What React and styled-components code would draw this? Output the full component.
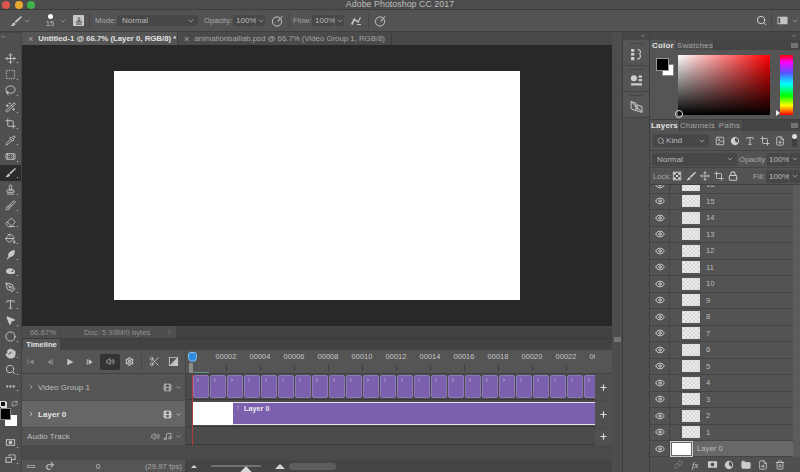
import React from "react";
import styled, { createGlobalStyle } from "styled-components";
import { Move, SquareDashed, Lasso, WandSparkles, Crop, Pipette, Bandage, Stamp, Brush, Eraser, PaintBucket, PenTool, Type, MousePointer2, Circle, Hand, Search, Ellipsis, Scissors, Volume2, Settings, Music, Film, ChevronDown, ChevronRight, Plus, Eye, Link, Folder, Trash2, Lock, Image, FilePlus, Redo2, Repeat } from "lucide-react";

const Global = createGlobalStyle`
  html, body { margin: 0; padding: 0; background: #4a4a4a; }
  * { box-sizing: border-box; }
  #root { width: 800px; height: 472px; overflow: hidden; }
`;

const Page = styled.div`
  width: 800px; height: 472px; display: flex; flex-direction: column; overflow: hidden;
  background: #505050; color: #c4c4c4;
  font-family: "Liberation Sans", sans-serif; font-size: 8px; letter-spacing: .05px;
`;
const TitleBar = styled.div`
  height: 10px; flex: none; background: #4c4c4c; position: relative; display: flex; justify-content: center;
  border-bottom: 1px solid #3c3c3c;
`;
const Title = styled.div`
  font: 8.8px/8px "Liberation Sans", sans-serif; color: #bdbdbd; letter-spacing: .05px;
`;
const Lights = styled.div`
  position: absolute; left: 2px; top: 1px; display: flex; gap: 4.5px;
`;
const Light = styled.i`
  width: 8px; height: 8px; border-radius: 50%; background: ${p => p.$c}; display: block;
`;
const Options = styled.div`
  height: 22px; flex: none; background: #535353; display: flex; align-items: center;
  border-bottom: 1px solid #3f3f3f;
`;
const Slot = styled.div`
  width: ${p => p.$w}px; padding-left: ${p => p.$pl || 0}px; flex: none; display: flex; align-items: center; justify-content: center; height: 100%;
`;
const OptSep = styled.div`
  width: 1px; height: 16px; background: #464646; flex: none; margin: 0 ${p => p.$m || 0}px;
`;
const Field = styled.div`
  width: ${p => p.$w}px; height: ${p => p.$h || 11}px; flex: none; background: #474747; border-radius: 2px; padding: 0 3px 0 ${p => p.$pl || 3}px;
  display: flex; align-items: center; justify-content: space-between; color: #bcbcbc; white-space: nowrap; gap: 2px;
`;
const KindLabel = styled.span`
  flex: 1; display: flex; align-items: center; gap: 1px;
`;
const ChevBox = styled.div`
  width: ${p => p.$w || 9}px; height: ${p => p.$h || 11}px; margin-left: 1px; flex: none; background: #474747; border-radius: 2px; display: flex; align-items: center; justify-content: center; color: #b0b0b0;
`;
const Lbl = styled.span`
  flex: none; width: ${p => p.$w}px; margin-left: ${p => p.$ml || 0}px; color: #a8a8a8; white-space: nowrap; font-size: 7.6px;
`;
const Spacer = styled.div` flex: 1; `;
const BrushDot = styled.div`
  width: ${p => p.$w}px; display: flex; flex-direction: column; align-items: center; flex: none; font-size: 7.5px; line-height: 8px; color: #bbb;
  &::before { content: ""; width: 5px; height: 5px; background: #fff; border-radius: 50%; margin-bottom: 1px; }
`;
const PresetBox = styled.div`
  width: 11px; height: 11px; background: #c9c9c9; flex: none; display: flex; align-items: center; justify-content: center; color: #333; border-radius: 1px;
`;
const Main = styled.div`
  flex: 1; display: flex; min-height: 0;
`;
const Tools = styled.div`
  width: 22px; flex: none; background: #505050; display: flex; flex-direction: column; align-items: center; border-right: 1px solid #444;
`;
const Grip = styled.div`
  height: 18px; width: 100%; flex: none; font-size: 6px; line-height: 7px; color: #999; padding-left: 1px; border-top: 1px solid #454545;
`;
const Tool = styled.div`
  width: 21px; height: 16.4px; flex: none; display: flex; align-items: center; justify-content: center; position: relative; color: #c8c8c8;
  background: ${p => p.$on ? "#2b2b2b" : "transparent"};
  &::after { content: ""; position: absolute; right: 3px; bottom: 3px; width: 1px; height: 1px; background: #ccc; }
`;
const SwapRow = styled.div`
  width: 21px; height: 14px; flex: none; display: flex; align-items: flex-end; justify-content: space-between; padding: 0 3px 1px 0; color: #ccc;
`;
const MiniChips = styled.span`
  width: 6px; height: 6px; background: #111; border: 1px solid #ddd; box-shadow: 1px 1px 0 #ddd; flex: none;
`;
const Swatches = styled.div`
  width: 21px; height: 24px; flex: none; position: relative; margin-bottom: 2px;
`;
const FgSwatch = styled.div`
  position: absolute; left: 0; top: 0; width: 11px; height: 12px; background: #000; border: 1px solid #888; z-index: 1;
`;
const BgSwatch = styled.div`
  position: absolute; left: 5px; top: 7px; width: 12px; height: 11px; background: #fff;
`;
const Center = styled.div`
  width: 590px; flex: none; display: flex; flex-direction: column;
`;
const Tabs = styled.div`
  height: 13px; flex: none; display: flex; background: #484848; align-items: stretch; overflow: hidden;
`;
const Tab = styled.div`
  width: ${p => p.$w}px; flex: none; background: ${p => p.$on ? "#565656" : "#4a4a4a"}; color: ${p => p.$on ? "#e2e2e2" : "#a6a6a6"};
  font-weight: ${p => p.$on ? 700 : 400}; display: flex; align-items: center; gap: 5px; padding-left: 6px; white-space: nowrap;
  font-size: 7.8px; letter-spacing: 0;
  border-right: 1px solid #3c3c3c;
`;
const TabX = styled.span` color: #a4a4a4; font-weight: 400; font-size: 9px; `;
const Canvas = styled.div`
  height: 281px; flex: none; background: #282828; display: flex; align-items: center; justify-content: center;
`;
const Sheet = styled.div`
  width: 406px; height: 229px; background: #fff;
`;
const Status = styled.div`
  height: 12px; flex: none; background: #424242; display: flex; align-items: stretch; font-size: 7.6px; color: #929292;
`;
const Zoomed = styled.div`
  width: 38px; flex: none; background: #4e4e4e; padding-left: 8px; display: flex; align-items: center; border-right: 1px solid #484848;
`;
const DocInfo = styled.div`
  width: 116px; flex: none; background: #4e4e4e; display: flex; align-items: center; justify-content: space-between; padding: 0 3px 0 24px;
`;
const Timeline = styled.div`
  flex: 1; display: flex; flex-direction: column; background: #4a4a4a; position: relative; overflow: hidden; border-top: 1px solid #3a3a3a;
`;
const TimelineHead = styled.div`
  height: 11px; flex: none; background: #424242; display: flex;
`;
const TimelineTab = styled.div`
  width: 37px; margin-left: 1px; background: #555; color: #e2e2e2; font-weight: 700; font-size: 7.6px; letter-spacing: 0; display: flex; align-items: center; justify-content: center;
`;
const TimelineControls = styled.div`
  height: 24px; flex: none; display: flex; background: #555; border-bottom: 1px solid #434343;
`;
const Transport = styled.div`
  width: 164px; flex: none; display: flex; align-items: center; border-right: 1px solid #434343; color: #c4c4c4;
`;
const Btn = styled.div`
  width: ${p => p.$w || 20}px; height: 16px; flex: none; display: flex; align-items: center; justify-content: center;
  color: ${p => p.$dim ? "#8a8a8a" : "inherit"}; background: ${p => p.$on ? "#333" : "transparent"}; border-radius: 2px;
`;
const Ruler = styled.div`
  width: 409px; flex: none; display: flex; padding-left: 23px; overflow: hidden;
`;
const RulerMark = styled.div`
  width: 34px; flex: none; display: flex; flex-direction: column; align-items: center; font-size: 7.4px; color: #c6c6c6; padding-top: 3px; line-height: 8px; letter-spacing: .1px;
  &::after { content: ""; width: 1px; height: 6px; background: #3e3e3e; margin-top: 4px; }
`;
const RulerEnd = styled.div` width: 17px; flex: none; `;
const Track = styled.div`
  display: flex; height: ${p => p.$h}px; flex: none; margin-bottom: 1px; background: ${p => p.$on ? "#666" : "#555"};
`;
const TrackLabel = styled.div`
  width: 164px; flex: none; display: flex; align-items: center; padding: 0 3px 0 5px; color: ${p => p.$on ? "#e4e4e4" : "#bebebe"}; font-weight: ${p => p.$on ? 700 : 400}; gap: 3px; border-right: 1px solid #434343;
`;
const TrackName = styled.span` flex: 1; white-space: nowrap; `;
const TrackBody = styled.div`
  width: 409px; flex: none; background: #4b4b4b; display: flex; padding: 1px 0 1px 7px; overflow: hidden; align-items: stretch; border-bottom: 1px solid #3a3a3a;
`;
const Clip = styled.div`
  width: 16px; margin-right: 1px; flex: none; background: #7b60ae; border: 1px solid #8d78b8; border-radius: 2px; color: #ddd; padding: 1px 0 0 1px;
  display: flex; align-items: flex-start;
`;
const Blank = styled.div`
  width: 40px; flex: none; background: #fff;
`;
const Bar = styled.div`
  flex: 1; background: #7b60ae; border-top: 1px solid #e8e4f0; border-bottom: 1px solid #e8e4f0; color: #eee; font-weight: 700; font-size: 7.2px; display: flex; align-items: flex-start; gap: 3px; padding: 1px 0 0 2px;
`;
const PlusCell = styled.div`
  width: 17px; flex: none; display: flex; align-items: center; justify-content: center; color: #ddd; background: #505050;
`;
const BottomBar = styled.div`
  height: 12px; flex: none; margin-top: auto; display: flex; background: #454545; align-items: center;
`;
const BottomLeft = styled.div`
  width: 164px; height: 100%; flex: none; background: #555; display: flex; align-items: center; color: #c4c4c4; padding-left: 5px; border-right: 1px solid #3f3f3f;
`;
const Frames = styled.span`
  width: 8px; height: 3px; border: 1px solid #999; flex: none;
`;
const ZoomBits = styled.div`
  display: flex; align-items: center; margin-left: 5px; flex: none; width: 94px; justify-content: space-between;
`;
const Mount = styled.div`
  width: 0; height: 0; border-left: ${p => p.$s}px solid transparent; border-right: ${p => p.$s}px solid transparent; border-bottom: ${p => p.$s}px solid #d6d6d6; flex: none;
`;
const ZoomTrack = styled.div`
  width: 50px; height: 2px; background: #707070; position: relative; flex: none;
  &::after { content: ""; position: absolute; left: 31px; top: 3px; width: 8px; height: 8px; background: #d8d8d8; transform: rotate(45deg); }
`;
const ScrollThumb = styled.div`
  width: 47px; height: 7px; margin-left: 4px; background: #5e5e5e; border-radius: 4px; flex: none;
`;
const Playhead = styled.div`
  position: absolute; left: 170px; top: 35px; bottom: 27px; width: 1px; background: #b33a3a;
`;
const PlayKnob = styled.div`
  position: absolute; left: 166px; top: 13px; width: 9px; height: 10px; background: #2f8be0; border-radius: 3px 3px 5px 5px; border: 1px solid #7fbcf0;
`;
const WorkMarker = styled.div`
  position: absolute; left: 167px; top: 24px; width: 4px; height: 10px; background: #8a8a8a; border-radius: 1px;
`;
const WorkLine = styled.div`
  position: absolute; left: 171px; top: 33px; width: 16px; height: 1px; background: #5f9a96;
`;
const Gutter = styled.div`
  width: 11px; flex: none; background: #4d4d4d; border-right: 1px solid #3e3e3e; display: flex; flex-direction: column; align-items: center; padding-top: 305px;
`;
const MiniMenu = styled.div`
  width: 7px; height: 5px; background: #747474; flex: none;
`;
const Dock = styled.div`
  width: 27px; flex: none; background: #4f4f4f; display: flex; flex-direction: column; border-right: 1px solid #3e3e3e;
`;
const DockTop = styled.div`
  height: 8px; flex: none; background: #474747; font-size: 6px; line-height: 7px; text-align: right; padding-right: 4px; color: #9a9a9a;
`;
const DockItem = styled.div`
  height: 26px; flex: none; background: #555; border-bottom: 1px solid #434343; display: flex; align-items: center; justify-content: center; color: #cfcfcf; padding-top: 3px; position: relative;
  &::before { content: ""; position: absolute; top: 3px; left: 7px; width: 13px; height: 1px; background: #444; }
`;
const Side = styled.div`
  flex: 1; display: flex; flex-direction: column; background: #535353; min-width: 0;
`;
const SideTop = styled(DockTop)``;
const PanelTabs = styled.div`
  height: ${p => p.$h || 10}px; flex: none; display: flex; background: #444; align-items: stretch; position: relative;
`;
const PanelTab = styled.div`
  width: ${p => p.$w}px; flex: none; display: flex; align-items: center; justify-content: center; letter-spacing: .2px;
  background: ${p => p.$on ? "#555" : "#4b4b4b"}; color: ${p => p.$on ? "#e2e2e2" : "#a4a4a4"}; font-weight: ${p => p.$on ? 700 : 400}; border-right: 1px solid #3f3f3f;
`;
const PanelMenu = styled(MiniMenu)`
  position: absolute; right: 2px; top: 3px;
`;
const ColorBody = styled.div`
  height: 70px; flex: none; background: #555; display: flex; padding: 5px 7px 0 6px; border-bottom: 1px solid #3f3f3f;
`;
const ColorChips = styled.div`
  width: 22px; flex: none; position: relative;
`;
const ChipFg = styled.div`
  position: absolute; left: 0; top: 3px; width: 13px; height: 13px; background: #000; border: 1px solid #999; z-index: 1;
`;
const ChipBg = styled.div`
  position: absolute; left: 6px; top: 9px; width: 12px; height: 12px; background: #fff; border: 1px solid #888;
`;
const ColorField = styled.div`
  width: 92px; height: 60px; flex: none; position: relative;
  background: linear-gradient(to top, #000 0%, rgba(0,0,0,0) 100%), linear-gradient(to right, #fff 0%, #f00 100%);
  &::after { content: ""; position: absolute; left: -3px; bottom: -3px; width: 6px; height: 6px; border-radius: 50%; border: 1px solid #ddd; }
`;
const Hue = styled.div`
  width: 13px; height: 60px; flex: none; margin-left: 10px; position: relative;
  background: linear-gradient(to bottom, #f00 0%, #f0f 12%, #55f 30%, #0ff 48%, #0f0 68%, #ff0 84%, #f00 100%);
  &::before { content: ""; position: absolute; left: -4px; bottom: -1px; border-left: 4px solid #eee; border-top: 3px solid transparent; border-bottom: 3px solid transparent; }
`;
const FilterRow = styled.div`
  height: 20px; flex: none; display: flex; align-items: center; padding-left: 3px; border-bottom: 1px solid #454545; color: #ccc;
`;
const Toggle = styled.div`
  width: 5px; height: 12px; border-radius: 3px; background: #3f3f3f; flex: none; position: relative; margin-left: 6px;
  &::before { content: ""; position: absolute; top: -1px; left: 0; width: 5px; height: 5px; border-radius: 50%; background: #ddd; }
`;
const BlendRow = styled.div`
  height: 17px; flex: none; display: flex; align-items: center; padding-left: 2px; border-bottom: 1px solid #454545;
`;
const LockRow = styled.div`
  height: 17px; flex: none; display: flex; align-items: center; padding-left: 3px; border-bottom: 1px solid #3f3f3f; color: #ccc;
`;
const Small = styled.span`
  width: 12px; height: 12px; flex: none; display: flex; align-items: center; justify-content: center; margin-left: ${p => p.$ml ?? 2}px; color: #ccc;
`;
const ListWrap = styled.div`
  flex: 1; min-height: 0; display: flex;
`;
const List = styled.div`
  width: 143px; flex: none; display: flex; flex-direction: column; justify-content: flex-end; overflow: hidden; background: #535353;
`;
const ScrollRail = styled.div` flex: 1; background: #5c5c5c; `;
const Row = styled.div`
  height: ${p => p.$active ? 16 : 16.5}px; flex: none; display: flex; align-items: center; border-bottom: 1px solid #444; color: #bdbdbd; font-size: 7.6px;
  background: ${p => p.$active ? "#686868" : "transparent"};
`;
const EyeCell = styled.div`
  width: 20px; flex: none; height: 100%; display: flex; align-items: center; justify-content: center; border-right: 1px solid #454545; color: #ddd; background: #535353;
`;
const Thumb = styled.div`
  width: 18px; height: 12px; flex: none; margin: 0 6px 0 12px; border: 1px solid #ddd;
  background: repeating-conic-gradient(#d6d6d6 0 25%, #ededed 0 50%) 0 0 / 4px 4px;
`;
const WhiteThumb = styled.div`
  width: 19px; height: 12px; flex: none; margin: 0 6px 0 2px; background: #fff; outline: 1px solid #ccc; outline-offset: 1px;
`;
const Footer = styled.div`
  height: 15px; flex: none; background: #505050; display: flex; align-items: center; padding-left: 22px; gap: 5px; color: #ccc;
`;
const Fx = styled.span`
  font: italic 9px "Liberation Serif", serif; color: #ccc; width: 12px; text-align: center; flex: none;
`;
const Glyph = styled.svg`
  flex: none; display: block; fill: currentColor; stroke: none;
`;

const Draw = ({ s = 11, children, vb = 12 }) => <Glyph width={s} height={s} viewBox={`0 0 ${vb} ${vb}`}>{children}</Glyph>;

const BrushGlyph = ({ s }) => <Draw s={s}><path d="M11 1 L12 2 L6 8 L4.6 6.6 Z M4 7.2 L5.6 8.8 C5 10.8 3 11.4 .6 11 C2 10 2.4 8 4 7.2 Z" /></Draw>;
const DodgeGlyph = () => <Draw><path d="M10.5 1 C11.5 5 9 9 5 9 L3 11.5 L2 10.8 L3.8 8.2 C2.2 5 6 1.4 10.5 1 Z" /></Draw>;
const SpongeGlyph = () => <Draw><path d="M3 3 C6 1.4 10 3 11 6 C11.5 8.6 8 9.2 6 8.6 C4 9 1 8 1 6 C1 5 2 3.6 3 3 Z" /><circle cx="8" cy="5.6" r="1" fill="#505050" /></Draw>;
const MaskGlyph = () => <Draw><path d="M1 2.5h10v7H1z M2 3.5v5h8v-5z" fillRule="evenodd" /><circle cx="6" cy="6" r="2" /></Draw>;
const ScreenGlyph = () => <Draw><path d="M4 1.5h7.5v6H8v-1h2.5v-4H5v1H4z M.5 4.5h7v6h-7z M1.5 5.5v4h5v-4z" fillRule="evenodd" /></Draw>;
const ToStart = () => <Draw s={8}><path d="M1 2h1.4v8H1z M10 2v8L4 6z" /></Draw>;
const StepBack = () => <Draw s={8}><path d="M8 2v8L2 6z M9.4 2h1.4v8H9.4z" /></Draw>;
const PlayGlyph = () => <Draw s={8}><path d="M2 1v10l9-5z" /></Draw>;
const StepNext = () => <Draw s={8}><path d="M1.2 2h1.4v8H1.2z M4 2v8l6-4z" /></Draw>;
const TransitionGlyph = () => <Draw><path d="M1 1h10v10H1z M2 2v8L10 2z" fillRule="evenodd" /></Draw>;
const DockOne = () => <Draw s={13}><path d="M1 1h3v2.4H1z M1 4.6h3V7H1z M1 8.2h3v3H1z" /><path d="M7 1.5c3 0 3.4 2.6 1.8 4 1.6 1.4 1 4.5-2 5" fill="none" stroke="currentColor" /></Draw>;
const DockTwo = () => <Draw s={13}><circle cx="3.6" cy="4" r="2.8" /><path d="M8 1.4h3v2H8z M8 4.6h3v2H8z M1 8.6h10v2H1z" /></Draw>;
const DockThree = () => <Draw s={13}><path d="M1 1.5 5.5 3v7L1 8z M6.5 4.5 11 6v5.5L6.5 10z M1 1.5 11 11" fill="none" stroke="currentColor" strokeWidth=".9" /></Draw>;
const LockChecker = () => <Draw s={10}><path d="M1 1h10v10H1z M2 2v8h8V2z" fillRule="evenodd" /><path d="M2 2h2.6v2.6H2z M7.4 2H10v2.6H7.4z M4.7 4.7h2.6v2.6H4.7z M2 7.4h2.6V10H2z M7.4 7.4H10V10H7.4z" /></Draw>;
const MaskBtn = () => <Draw s={11}><path d="M1 2.5h10v7H1z M6 4a2 2 0 1 0 .01 0z" fillRule="evenodd" /></Draw>;
const AdjBtn = () => <Draw s={10}><path d="M6 1a5 5 0 1 0 .01 0z M6 2.2V6l3 2.4A3.8 3.8 0 0 0 6 2.2z" fillRule="evenodd" /></Draw>;
const Aim = () => <Draw s={12}><circle cx="6" cy="6.5" r="4.6" fill="none" stroke="currentColor" /><path d="M6.5 6 11 1l.6.6L7 7z" /></Draw>;
const AimFlow = () => <Draw s={12}><path d="M1 9 4 3l4 3 2-4 1 .6L8.4 8 4.6 5.4 2.6 10z M7 9h4v1H7z" /></Draw>;
const WorkspaceIcon = () => <Draw s={11}><path d="M.5 2h11v8H.5z M1.5 3v6h2V3z" fillRule="evenodd" /></Draw>;

const tools = [
  <Move size={11} />, <SquareDashed size={11} />, <Lasso size={11} />, <WandSparkles size={11} />,
  <Crop size={11} />, <Pipette size={11} />, <Bandage size={11} />, <BrushGlyph s={11} />,
  <Stamp size={11} />, <Brush size={11} />, <Eraser size={11} />, <PaintBucket size={11} />,
  <DodgeGlyph />, <SpongeGlyph />, <PenTool size={11} />, <Type size={11} strokeWidth={2} />,
  <MousePointer2 size={11} fill="#c8c8c8" />, <Circle size={11} />, <Hand size={11} fill="#c8c8c8" />, <Search size={11} />,
  <Ellipsis size={11} strokeWidth={3} />
];
const layers = [16, 15, 14, 13, 12, 11, 10, 9, 8, 7, 6, 5, 4, 3, 2, 1];
const marks = ["00002", "00004", "00006", "00008", "00010", "00012", "00014", "00016", "00018", "00020", "00022", "00024"];

export default function App() {
  return (
    <Page>
      <Global />
      <TitleBar>
        <Lights><Light $c="#d9544d" /><Light $c="#e8a82e" /><Light $c="#3fb34a" /></Lights>
        <Title>Adobe Photoshop CC 2017</Title>
      </TitleBar>
      <Options>
        <Slot $w={22} $pl={10}><BrushGlyph s={12} /></Slot>
        <Slot $w={10}><ChevronDown size={8} color="#aaa" /></Slot>
        <Slot $w={10} />
        <BrushDot $w={16}>15</BrushDot>
        <Slot $w={10}><ChevronDown size={8} color="#aaa" /></Slot>
        <Slot $w={5} />
        <PresetBox><Stamp size={8} /></PresetBox>
        <OptSep $m={5} />
        <Lbl $w={22}>Mode:</Lbl>
        <Field $w={81} $pl={5}>Normal<ChevronDown size={8} /></Field>
        <Slot $w={6} />
        <Lbl $w={29}>Opacity:</Lbl>
        <Field $w={22}>100%</Field>
        <ChevBox><ChevronDown size={8} /></ChevBox>
        <Slot $w={24}><Aim /></Slot>
        <OptSep />
        <Slot $w={3} />
        <Lbl $w={19}>Flow:</Lbl>
        <Field $w={22}>100%</Field>
        <ChevBox><ChevronDown size={8} /></ChevBox>
        <Slot $w={24}><AimFlow /></Slot>
        <OptSep />
        <Slot $w={21}><Aim /></Slot>
        <Spacer />
        <Slot $w={14}><Search size={11} color="#ddd" strokeWidth={2} /></Slot>
        <OptSep $m={3} />
        <Slot $w={14}><WorkspaceIcon /></Slot>
        <Slot $w={11}><ChevronDown size={8} color="#aaa" /></Slot>
      </Options>
      <Main>
        <Tools>
          <Grip>››</Grip>
          {tools.map((icon, i) => (
            <Tool key={i} $on={i === 7}>{icon}</Tool>
          ))}
          <SwapRow><MiniChips /><Repeat size={7} /></SwapRow>
          <Swatches><BgSwatch /><FgSwatch /></Swatches>
          <Tool><MaskGlyph /></Tool>
          <Tool><ScreenGlyph /></Tool>
        </Tools>
        <Center>
          <Tabs>
            <Tab $w={156} $on><TabX>×</TabX>Untitled-1 @ 66.7% (Layer 0, RGB/8) *</Tab>
            <Tab $w={214}><TabX>×</TabX>animationballlab.psd @ 66.7% (Video Group 1, RGB/8)</Tab>
          </Tabs>
          <Canvas><Sheet /></Canvas>
          <Status>
            <Zoomed>66.67%</Zoomed>
            <DocInfo>Doc: 5.93M/0 bytes<ChevronRight size={7} /></DocInfo>
          </Status>
          <Timeline>
            <TimelineHead><TimelineTab>Timeline</TimelineTab></TimelineHead>
            <TimelineControls>
              <Transport>
                <Btn $w={18} $dim><ToStart /></Btn>
                <Btn $dim><StepBack /></Btn>
                <Btn><PlayGlyph /></Btn>
                <Btn><StepNext /></Btn>
                <Btn $on><Volume2 size={9} /></Btn>
                <Btn $w={18}><Settings size={9} strokeWidth={3} /></Btn>
                <OptSep $m={3} />
                <Btn $w={18}><Scissors size={11} /></Btn>
                <Btn><TransitionGlyph /></Btn>
              </Transport>
              <Ruler>{marks.map(m => <RulerMark key={m}>{m}</RulerMark>)}</Ruler>
              <RulerEnd />
            </TimelineControls>
            <Track $h={26}>
              <TrackLabel>
                <ChevronRight size={8} /><TrackName>Video Group 1</TrackName>
                <Film size={9} /><ChevronDown size={7} />
              </TrackLabel>
              <TrackBody>
                {Array.from({ length: 24 }, (_, i) => <Clip key={i}><ChevronRight size={6} /></Clip>)}
              </TrackBody>
              <PlusCell><Plus size={9} strokeWidth={3} /></PlusCell>
            </Track>
            <Track $h={26} $on>
              <TrackLabel $on>
                <ChevronRight size={8} /><TrackName>Layer 0</TrackName>
                <Film size={9} /><ChevronDown size={7} />
              </TrackLabel>
              <TrackBody>
                <Blank />
                <Bar><ChevronRight size={6} />Layer 0</Bar>
              </TrackBody>
              <PlusCell><Plus size={9} strokeWidth={3} /></PlusCell>
            </Track>
            <Track $h={17}>
              <TrackLabel>
                <TrackName>Audio Track</TrackName>
                <Volume2 size={9} /><Music size={9} /><ChevronDown size={7} />
              </TrackLabel>
              <TrackBody />
              <PlusCell><Plus size={9} strokeWidth={3} /></PlusCell>
            </Track>
            <BottomBar>
              <BottomLeft>
                <Frames />
                <Slot $w={8} />
                <Slot $w={14}><Redo2 size={10} strokeWidth={2.5} /></Slot>
                <Slot $w={82}>0</Slot>
                <Slot $w={6} />
                <Lbl $w={40}>(29.97 fps)</Lbl>
              </BottomLeft>
              <ZoomBits><Mount $s={3} /><ZoomTrack /><Mount $s={5} /></ZoomBits>
              <ScrollThumb />
            </BottomBar>
            <WorkMarker />
            <WorkLine />
            <Playhead />
            <PlayKnob />
          </Timeline>
        </Center>
        <Gutter><MiniMenu /></Gutter>
        <Dock>
          <DockTop>‹‹</DockTop>
          <DockItem><DockOne /></DockItem>
          <DockItem><DockTwo /></DockItem>
          <DockItem><DockThree /></DockItem>
        </Dock>
        <Side>
          <SideTop>››</SideTop>
          <PanelTabs>
            <PanelTab $w={27} $on>Color</PanelTab>
            <PanelTab $w={37}>Swatches</PanelTab>
            <PanelMenu />
          </PanelTabs>
          <ColorBody>
            <ColorChips><ChipBg /><ChipFg /></ColorChips>
            <ColorField />
            <Hue />
          </ColorBody>
          <PanelTabs $h={11}>
            <PanelTab $w={30} $on>Layers</PanelTab>
            <PanelTab $w={36}>Channels</PanelTab>
            <PanelTab $w={28}>Paths</PanelTab>
            <PanelMenu />
          </PanelTabs>
          <FilterRow>
            <Field $w={56} $h={13} $pl={4}><KindLabel><Search size={8} />Kind</KindLabel><ChevronDown size={8} /></Field>
            <Small $ml={5}><Image size={10} /></Small>
            <Small $ml={3}><AdjBtn /></Small>
            <Small $ml={3}><Type size={10} strokeWidth={2} /></Small>
            <Small $ml={3}><Crop size={10} /></Small>
            <Small $ml={3}><FilePlus size={10} /></Small>
            <Toggle />
          </FilterRow>
          <BlendRow>
            <Field $w={85} $h={13} $pl={5}>Normal<ChevronDown size={8} /></Field>
            <Lbl $w={27} $ml={2}>Opacity:</Lbl>
            <Field $w={22} $h={13}>100%</Field>
            <ChevBox $w={11} $h={13}><ChevronDown size={8} /></ChevBox>
          </BlendRow>
          <LockRow>
            <Lbl $w={18}>Lock:</Lbl>
            <Small $ml={0}><LockChecker /></Small>
            <Small><BrushGlyph s={10} /></Small>
            <Small><Move size={10} /></Small>
            <Small><Crop size={10} /></Small>
            <Small><Lock size={10} strokeWidth={2.5} /></Small>
            <Spacer />
            <Lbl $w={13}>Fill:</Lbl>
            <Field $w={22} $h={13}>100%</Field>
            <ChevBox $w={11} $h={13}><ChevronDown size={8} /></ChevBox>
          </LockRow>
          <ListWrap>
            <List>
              {layers.map(n => (
                <Row key={n}>
                  <EyeCell><Eye size={10} strokeWidth={2} /></EyeCell>
                  <Thumb />{n}
                </Row>
              ))}
              <Row $active>
                <EyeCell><Eye size={10} strokeWidth={2} /></EyeCell>
                <WhiteThumb />Layer 0
              </Row>
            </List>
            <ScrollRail />
          </ListWrap>
          <Footer>
            <Small $ml={0}><Link size={9} color="#888" /></Small>
            <Fx>fx</Fx>
            <Small $ml={0}><MaskBtn /></Small>
            <Small $ml={0}><AdjBtn /></Small>
            <Small $ml={0}><Folder size={10} fill="#ccc" /></Small>
            <Small $ml={0}><FilePlus size={10} /></Small>
            <Small $ml={0}><Trash2 size={10} /></Small>
          </Footer>
        </Side>
      </Main>
    </Page>
  );
}
